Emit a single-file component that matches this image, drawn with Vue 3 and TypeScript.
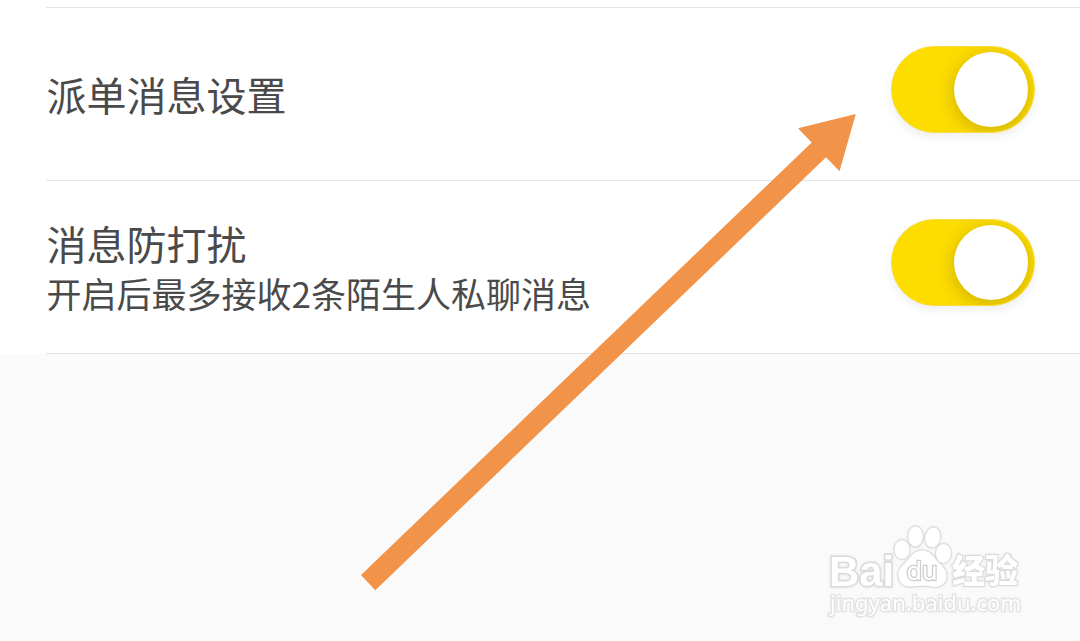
<script setup lang="ts">
interface Setting {
  title: string
  note?: string
}

const settings: Setting[] = [
  { title: '派单消息设置' },
  { title: '消息防打扰', note: '开启后最多接收2条陌生人私聊消息' },
]
</script>

<template>
  <main class="screen">
    <section class="list">
      <div v-for="item in settings" :key="item.title" class="row">
        <div class="labels">
          <div class="title">{{ item.title }}</div>
          <div v-if="item.note" class="note">{{ item.note }}</div>
        </div>
        <button class="toggle" type="button" role="switch" aria-checked="true" :aria-label="item.title">
          <span class="knob"></span>
        </button>
      </div>
    </section>

    <svg class="arrow" width="1080" height="641" viewBox="0 0 1080 641" aria-hidden="true">
      <polygon points="855.8,114 798,128.3 811.7,142.5 361,575 375.3,590.3 826,157.3 839.5,171.3" fill="#f2934a" />
    </svg>

    <svg class="watermark" width="210" height="110" viewBox="0 0 210 110">
      <g class="mark">
        <text class="latin" x="9" y="70.5" textLength="65" lengthAdjust="spacingAndGlyphs">Bai</text>
        <text class="cjk" x="132" y="68" textLength="66" lengthAdjust="spacingAndGlyphs">经验</text>
        <text class="url" x="10" y="96" textLength="191" lengthAdjust="spacingAndGlyphs">jingyan.baidu.com</text>
        <ellipse cx="82" cy="34.500" rx="7.5" ry="9.5" />
        <ellipse cx="95.5" cy="21.500" rx="7.3" ry="10" />
        <ellipse cx="112.7" cy="22.500" rx="7.5" ry="10" transform="rotate(12 112.7 22.5)" />
        <ellipse cx="123.5" cy="38.5" rx="7.5" ry="9.5" />
        <path d="M102 35.5C94 35.5 91.500 41 87 46C82 51 78 54 78.500 61C79 68 84 72 91 71.500C98 71 106 70 112 71.500C120 73 126 69 126.500 62C127 55 123 52 118 47C113 41 110 35.500 102 35.500Z" />
        <text class="du" x="86.5" y="64.5" textLength="31" lengthAdjust="spacingAndGlyphs">du</text>
      </g>
    </svg>
  </main>
</template>

<style>
body {
  margin: 0;
  overflow: hidden;
}
</style>

<style scoped>
.screen {
  position: relative;
  width: 1080px;
  height: 641px;
  overflow: hidden;
  background: #fafafa;
  color: #4a4a4a;
  font-family: "Noto Sans CJK SC", "Noto Sans", sans-serif;
}

.list {
  box-sizing: border-box;
  height: 354px;
  padding: 7px 0 0 46px;
  background: #fff;
}

.row {
  box-sizing: border-box;
  display: flex;
  align-items: center;
  justify-content: space-between;
  height: 173px;
  padding-right: 45px;
  border-top: 1px solid #e5e5e5;
}

.row:last-child {
  height: 174px;
  border-bottom: 1px solid #e5e5e5;
}

.labels {
  padding-left: 0.6px;
}

.title {
  font-size: 40px;
  line-height: 52px;
}

.note {
  font-size: 35px;
  line-height: 48px;
}

.toggle {
  box-sizing: border-box;
  display: flex;
  align-items: center;
  justify-content: flex-end;
  width: 144px;
  height: 87px;
  margin-bottom: 9px;
  padding: 0 6px 0 0;
  border: 1px solid #f8dc3c;
  border-radius: 44px;
  background: #fddc00;
  box-shadow: 0 4px 10px rgba(0, 0, 0, 0.07);
  overflow: hidden;
}

.knob {
  width: 74px;
  height: 75px;
  border-radius: 50%;
  background: #fff;
  box-shadow: 0 4px 16px 2px rgba(120, 100, 0, 0.3);
}

.arrow {
  position: absolute;
  left: 0;
  top: 0;
}

.watermark {
  position: absolute;
  left: 820px;
  top: 515px;
}

.mark {
  fill: #fff;
  stroke: #dadada;
  stroke-width: 2px;
  paint-order: stroke;
  filter: drop-shadow(0 0 1px rgba(0, 0, 0, 0.1));
}

.latin {
  font: 700 43px "Liberation Sans", sans-serif;
  stroke-width: 3px;
}

.cjk {
  font: 900 33px "Noto Sans CJK SC", sans-serif;
}

.url {
  font: 400 22px "Noto Sans", sans-serif;
  stroke: #e0e0e0;
}

.du {
  font: 400 25px "Noto Sans", sans-serif;
  stroke: #cecece;
  stroke-width: 2.6px;
}
</style>
